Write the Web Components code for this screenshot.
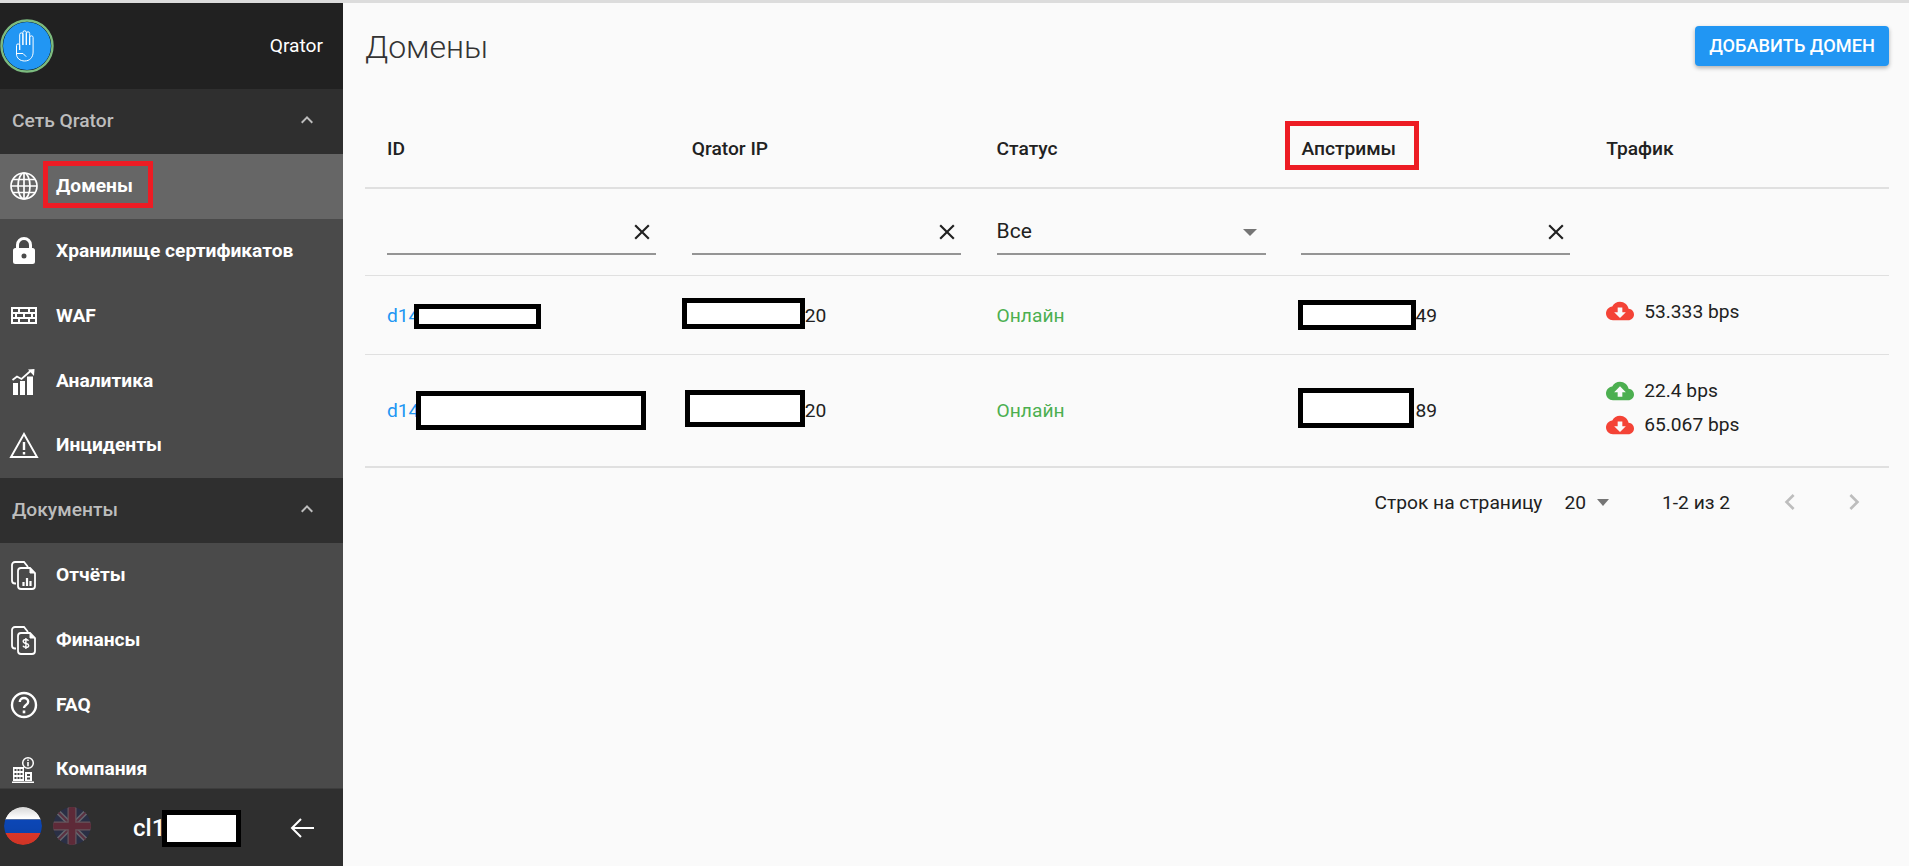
<!DOCTYPE html>
<html lang="ru">
<head>
<meta charset="utf-8">
<title>Домены</title>
<style>
  html, body { margin: 0; height: 100%; overflow: hidden; background: #fafafa; }
  body { font-family: Roboto, "Liberation Sans", sans-serif; }
</style>
</head>
<body>
<qr-app>
  <qr-sidebar slot="side">
    <qr-nav-group label="Сеть Qrator"></qr-nav-group>
    <qr-nav-item icon="globe" active marked>Домены</qr-nav-item>
    <qr-nav-item icon="lock">Хранилище сертификатов</qr-nav-item>
    <qr-nav-item icon="wall">WAF</qr-nav-item>
    <qr-nav-item icon="chart">Аналитика</qr-nav-item>
    <qr-nav-item icon="warn">Инциденты</qr-nav-item>
    <qr-nav-group label="Документы"></qr-nav-group>
    <qr-nav-item icon="report">Отчёты</qr-nav-item>
    <qr-nav-item icon="finance">Финансы</qr-nav-item>
    <qr-nav-item icon="faq">FAQ</qr-nav-item>
    <qr-nav-item icon="company">Компания</qr-nav-item>
  </qr-sidebar>
  <qr-domains slot="main"></qr-domains>
</qr-app>

<script>
const PAGES = `<path d="M7 23.500H6a3 3 0 0 1-3-3V5a3 3 0 0 1 3-3h9l4 5"/><path d="M12 8h9l5 5v13a3 3 0 0 1-3 3H12a3 3 0 0 1-3-3V11a3 3 0 0 1 3-3z"/><path d="M21 8l5 5h-5z" fill="#fff" stroke-width="1"/>`;
const ICONS = {
  globe: `<svg width="30" height="30" viewBox="0 0 30 30" fill="none" stroke="#fff" stroke-width="1.7"><circle cx="15" cy="15" r="13"/><ellipse cx="15" cy="15" rx="6" ry="13"/><path d="M15 2v26M2 15h26M4 8.500h22M4 21.500h22"/></svg>`,
  lock: `<svg width="30" height="30" viewBox="0 0 30 30" fill="#fff"><path fill-rule="evenodd" d="M15 1a8 8 0 0 0-8 8v3H6.500A2.500 2.500 0 0 0 4 14.500v11A2.500 2.500 0 0 0 6.500 28h17a2.500 2.500 0 0 0 2.500-2.500v-11A2.500 2.500 0 0 0 23.500 12H23V9a8 8 0 0 0-8-8zm0 3a5 5 0 0 1 5 5v3H10V9a5 5 0 0 1 5-5zm0 13.500a2.500 2.500 0 1 1 0 5 2.500 2.500 0 0 1 0-5z"/></svg>`,
  wall: `<svg width="30" height="30" viewBox="0 0 30 30" fill="none" stroke="#fff" stroke-width="2"><rect x="3" y="7" width="24" height="15"/><path d="M3 12h24M3 17h24M10 7v5M20 7v5M7 12v5M15 12v5M23 12v5M10 17v5M20 17v5"/></svg>`,
  chart: `<svg width="30" height="30" viewBox="0 0 30 30" fill="#fff"><path d="M4 17h5v12H4zM11 15h5v14h-5zM18 10.500h6V29h-6z"/><path d="M3.500 14l4.500-3.500 4.500 2.500 9-8" fill="none" stroke="#fff" stroke-width="1.800"/><path d="M19 3.500l6.500-.5-.5 7z"/></svg>`,
  warn: `<svg width="30" height="30" viewBox="0 0 30 30" fill="none"><path d="M15 4L28 27H2z" stroke="#fff" stroke-width="1.900"/><path d="M13.800 12h2.400v8h-2.400zM13.800 22h2.400v2.500h-2.400z" fill="#fff"/></svg>`,
  report: `<svg width="30" height="30" viewBox="0 0 30 30" fill="none" stroke="#fff" stroke-width="1.800">${PAGES}<path d="M14.500 26v-4M18 26v-8M21.500 26v-5" stroke-width="2.200"/></svg>`,
  finance: `<svg width="30" height="30" viewBox="0 0 30 30" fill="none" stroke="#fff" stroke-width="1.800">${PAGES}<path d="M19.500 15.800c-.4-.9-1.300-1.300-2.600-1.300-1.700 0-2.700.8-2.700 2 0 2.600 5.500 1.500 5.500 4 0 1.200-1.200 1.900-2.800 1.900-1.500 0-2.600-.6-2.900-1.600M16.900 13v11" stroke-width="1.400"/></svg>`,
  faq: `<svg width="30" height="30" viewBox="0 0 30 30" fill="none" stroke="#fff"><circle cx="15" cy="15" r="12" stroke-width="2.400"/><path d="M10.800 12c0-2.400 1.800-4 4.200-4s4.200 1.600 4.200 3.700c0 3.300-4.200 3.400-4.200 6.300" stroke-width="2.400"/><path d="M15 20.500v2.800" stroke-width="2.600"/></svg>`,
  company: `<svg width="30" height="30" viewBox="0 0 30 30" fill="#fff"><path d="M4 13h11v14H4zM16 18h7v9h-7zM3 27.500h22V29H3z"/><circle cx="19" cy="9" r="5.300" fill="none" stroke="#fff" stroke-width="1.500"/><path d="M18.200 8h1.600v4.300h-1.600zM18.200 5.500h1.600V7h-1.600z"/><path d="M5.500 15h2v2h-2zM8.500 15h2v2h-2zM11.500 15h2v2h-2zM5.500 19h2v2h-2zM8.500 19h2v2h-2zM11.500 19h2v2h-2zM5.500 23h2v2h-2zM8.500 23h2v2h-2zM11.500 23h2v2h-2zM18 20h3v2h-3zM18 23.500h3v2h-3z" fill="#4a4a4a"/></svg>`
};
const CLOSE = `<svg width="26" height="26" viewBox="0 0 24 24" fill="#212121"><path d="M19 6.410L17.590 5 12 10.590 6.410 5 5 6.410 10.590 12 5 17.590 6.410 19 12 13.410 17.590 19 19 17.590 13.410 12z"/></svg>`;
const CLOUD_BASE = 'M19.350 10.040C18.670 6.590 15.640 4 12 4 9.110 4 6.600 5.640 5.350 8.040 2.340 8.360 0 10.910 0 14c0 3.310 2.690 6 6 6h13c2.760 0 5-2.240 5-5 0-2.640-2.050-4.780-4.650-4.960z';

function define(name, html) {
  customElements.define(name, class extends HTMLElement {
    connectedCallback() {
      if (this.shadowRoot) return;
      this.attachShadow({ mode: 'open' });
      this.shadowRoot.innerHTML = typeof html === 'function' ? html(this) : html;
    }
  });
}

define('qr-app', `
  <style>
    :host { display: flex; flex-direction: column; height: 866px; background: #fafafa; }
    .strip { height: 3px; background: #dcdcdc; flex: none; }
    .body { flex: 1; display: flex; min-height: 0; }
    .side { flex: none; width: 343px; display: flex; }
    .main { flex: 1; min-width: 0; padding: 0 20px 0 21px; margin-left: 1px; }
  </style>
  <div class="strip"></div>
  <div class="body">
    <div class="side"><slot name="side"></slot></div>
    <div class="main"><slot name="main"></slot></div>
  </div>
`);

define('qr-sidebar', `
  <style>
    :host { display: flex; flex-direction: column; width: 343px; background: #4a4a4a; color: #fff; }
    header { flex: none; height: 86px; background: #212121; display: flex; align-items: center; justify-content: space-between; padding-right: 20px; }
    .logo { width: 54px; height: 54px; flex: none; margin-top: -1px; }
    .name { font-size: 19.200px; margin-top: -1px; }
    .scroll { flex: 1; min-height: 0; overflow: hidden; }
    footer { flex: none; height: 78px; background: #2f2f2f; border-top: 1px solid #3d3d3d; box-sizing: border-box; position: relative; display: flex; align-items: center; }
    .flag { width: 38px; height: 38px; border-radius: 50%; flex: none; margin-top: -4px; }
    .ru { margin-left: 4px; }
    .uk { margin-left: 11px; }
    .user { margin-left: 42px; width: 157px; font-size: 24px; font-weight: 500; }
    .back { flex: none; width: 24px; height: 24px; }
    .mask { position: absolute; left: 162px; top: 21px; width: 79px; height: 37px; background: #fff; border: 5px solid #000; box-sizing: border-box; }
  </style>
  <header>
    <svg class="logo" viewBox="0 0 54 54">
      <circle cx="27" cy="27" r="25.500" fill="#000" stroke="#7cbb7f" stroke-width="2.400"/>
      <circle cx="27" cy="27" r="24" fill="#2196f3"/>
      <path d="M16.500 35V26.500a1.600 1.600 0 0 1 3.200 0V31M19.700 31V15.500a1.600 1.600 0 0 1 3.200 0V26V13.500a1.700 1.700 0 0 1 3.400 0V26V14.500a1.700 1.700 0 0 1 3.400 0V26V18.500a1.700 1.700 0 0 1 3.400 0V33c0 5.500-3.500 9-8.400 9-4.800 0-8.200-3-8.200-7M17 34.500h6l3.200 3.200" fill="none" stroke="#fff" stroke-width="1" stroke-linejoin="round"/>
    </svg>
    <span class="name">Qrator</span>
  </header>
  <div class="scroll"><slot></slot></div>
  <footer>
    <svg class="flag ru" viewBox="0 0 38 38">
      <defs>
        <clipPath id="c"><circle cx="19" cy="19" r="19"/></clipPath>
        <linearGradient id="g" x1="0" y1="0" x2="0" y2="1"><stop offset="0" stop-color="#000" stop-opacity=".16"/><stop offset=".3" stop-color="#000" stop-opacity="0"/><stop offset="1" stop-color="#000" stop-opacity=".1"/></linearGradient>
      </defs>
      <g clip-path="url(#c)"><rect width="38" height="12.500" fill="#fff"/><rect y="12.500" width="38" height="13.500" fill="#0c47b7"/><rect y="26" width="38" height="12" fill="#e63a2a"/><rect width="38" height="38" fill="url(#g)"/></g>
    </svg>
    <svg class="flag uk" viewBox="0 0 38 38">
      <defs><clipPath id="d"><circle cx="19" cy="19" r="19"/></clipPath></defs>
      <g clip-path="url(#d)"><rect width="38" height="38" fill="#2a2f45"/><path d="M0 0l38 38M38 0L0 38" stroke="#66666e" stroke-width="5"/><path d="M0 0l38 38M38 0L0 38" stroke="#5a3040" stroke-width="2"/><path d="M19 0v38M0 19h38" stroke="#66565c" stroke-width="9"/><path d="M19 0v38M0 19h38" stroke="#5e2a38" stroke-width="6.500"/></g>
    </svg>
    <span class="user">cl1</span>
    <svg class="back" viewBox="0 0 24 24" fill="none" stroke="#fff" stroke-width="2"><path d="M24 12H2M11 3l-9 9 9 9"/></svg>
    <div class="mask"></div>
  </footer>
`);

define('qr-nav-group', el => `
  <style>
    :host { display: flex; align-items: center; justify-content: space-between; height: 64.800px; box-sizing: border-box; background: #2f2f2f; padding: 0 24px 2px 12px; color: #bdbdbd; font-size: 19.200px; font-weight: 500; }
    svg { display: block; }
  </style>
  <span>${el.getAttribute('label')}</span>
  <svg width="24" height="24" viewBox="0 0 24 24" fill="#bdbdbd"><path d="M7.410 15.410L12 10.830l4.590 4.580L18 14l-6-6-6 6z"/></svg>
`);

define('qr-nav-item', el => `
  <style>
    :host { display: flex; align-items: center; height: 64.800px; background: ${el.hasAttribute('active') ? '#666' : '#4a4a4a'}; padding-left: 9px; position: relative; font-size: 19.200px; font-weight: 700; color: #fff; white-space: nowrap; }
    .icon { flex: none; width: 30px; height: 30px; margin-right: 17px; }
    .icon svg { display: block; }
    .text { margin-top: -1px; }
    .mark { position: absolute; left: 43px; top: 7px; width: 110px; height: 47px; border: 5px solid #ed1c24; box-sizing: border-box; }
  </style>
  <span class="icon">${ICONS[el.getAttribute('icon')]}</span>
  <span class="text"><slot></slot></span>
  ${el.hasAttribute('marked') ? '<div class="mark"></div>' : ''}
`);

define('qr-redact', el => `
  <style>
    :host { position: absolute; box-sizing: border-box; border: 5px solid #000; background: #fff; left: ${el.getAttribute('x')}px; top: ${el.getAttribute('y')}px; width: ${el.getAttribute('w')}px; height: ${el.getAttribute('h')}px; }
  </style>
`);

define('qr-filter', el => `
  <style>
    :host { display: flex; align-items: center; justify-content: space-between; height: 44px; width: 269px; box-sizing: border-box; border-bottom: 2px solid #949494; font-size: 21px; color: #212121; }
    svg { display: block; margin-right: 1px; }
    .value { margin-top: -2px; }
    .caret { width: 0; height: 0; border: 7.500px solid transparent; border-top: 7.500px solid #757575; border-bottom: 0; margin-right: 9px; }
  </style>
  ${el.hasAttribute('select')
    ? `<span class="value">${el.getAttribute('select')}</span><span class="caret"></span>`
    : `<span></span>${CLOSE}`}
`);

define('qr-traffic', el => `
  <style>
    :host { display: flex; align-items: center; height: 34px; font-size: 19.200px; color: #212121; white-space: nowrap; }
    svg { display: block; margin-right: 10px; }
  </style>
  <svg width="28" height="28" viewBox="0 0 24 24" fill="${el.getAttribute('dir') === 'up' ? '#4caf50' : '#f44336'}">
    <path d="${CLOUD_BASE}"/>
    <path fill="#fafafa" d="${el.getAttribute('dir') === 'up' ? 'M14 13v4h-4v-4H7l5-5 5 5h-3z' : 'M17 13l-5 5-5-5h3V9h4v4h3z'}"/>
  </svg>
  <slot></slot>
`);

define('qr-domains', `
  <style>
    :host { display: block; color: #212121; font-size: 19.200px; }
    .top { display: flex; justify-content: space-between; align-items: flex-start; height: 114px; }
    h1 { margin: 21px 0 0; font-size: 32px; font-weight: 300; line-height: 46px; color: #333; }
    button { all: unset; margin-top: 23px; width: 194px; height: 40px; background: #2196f3; color: #fff; border-radius: 4px; font: 500 18.200px Roboto, sans-serif; text-align: center; line-height: 38px; box-shadow: 0 2px 4px rgba(0,0,0,.3); }
    .row { display: grid; grid-template-columns: repeat(5, 1fr); }
    .cell { padding-left: 22px; position: relative; display: flex; align-items: center; }
    .head { height: 62px; padding-bottom: 8px; border-bottom: 2px solid #e0e0e0; font-weight: 500; }
    .filters { height: 87px; border-bottom: 1px solid #e0e0e0; box-sizing: border-box; }
    .filters .cell { padding-top: 2px; }
    .r1 { height: 79px; border-bottom: 1px solid #e0e0e0; box-sizing: border-box; }
    .r2 { height: 113px; border-bottom: 2px solid #e0e0e0; box-sizing: border-box; }
    a { color: #2196f3; }
    .ok { color: #4caf50; }
    .mark { position: absolute; left: -16px; top: -16px; width: 134px; height: 49px; border: 5px solid #ed1c24; box-sizing: border-box; }
    .label { position: relative; }
    .traffic { flex-direction: column; align-items: stretch; }
    .pager { display: flex; justify-content: flex-end; align-items: center; height: 68px; }
    .pager span { white-space: nowrap; }
    .caret { width: 0; height: 0; border: 6.500px solid transparent; border-top: 7px solid #757575; border-bottom: 0; margin-left: 11px; }
    .chev { display: block; }
  </style>
  <div class="top">
    <h1>Домены</h1>
    <button>ДОБАВИТЬ ДОМЕН</button>
  </div>
  <div class="row head">
    <div class="cell">ID</div>
    <div class="cell">Qrator IP</div>
    <div class="cell">Статус</div>
    <div class="cell"><span class="label">Апстримы<div class="mark"></div></span></div>
    <div class="cell">Трафик</div>
  </div>
  <div class="row filters">
    <div class="cell"><qr-filter></qr-filter></div>
    <div class="cell"><qr-filter></qr-filter></div>
    <div class="cell"><qr-filter select="Все"></qr-filter></div>
    <div class="cell"><qr-filter></qr-filter></div>
    <div class="cell"></div>
  </div>
  <div class="row r1">
    <div class="cell"><a>d14</a><qr-redact x="49" y="28" w="127" h="25"></qr-redact></div>
    <div class="cell"><span style="margin-left:113px">20</span><qr-redact x="12" y="22" w="123" h="31"></qr-redact></div>
    <div class="cell ok">Онлайн</div>
    <div class="cell"><span style="margin-left:114px">49</span><qr-redact x="19" y="24" w="118" h="30"></qr-redact></div>
    <div class="cell traffic" style="justify-content:flex-start;padding-top:18px;box-sizing:border-box"><qr-traffic dir="down">53.333 bps</qr-traffic></div>
  </div>
  <div class="row r2">
    <div class="cell"><a>d14</a><qr-redact x="51" y="36" w="230" h="39"></qr-redact></div>
    <div class="cell"><span style="margin-left:113px">20</span><qr-redact x="15" y="35" w="120" h="37"></qr-redact></div>
    <div class="cell ok">Онлайн</div>
    <div class="cell"><span style="margin-left:114px">89</span><qr-redact x="19" y="33" w="116" h="40"></qr-redact></div>
    <div class="cell traffic" style="justify-content:center;padding-bottom:6px;box-sizing:border-box"><qr-traffic dir="up">22.4 bps</qr-traffic><qr-traffic dir="down">65.067 bps</qr-traffic></div>
  </div>
  <div class="pager">
    <span>Строк на страницу</span>
    <span style="margin-left:22px">20</span>
    <span class="caret"></span>
    <span style="margin-left:53px">1-2 из 2</span>
    <svg class="chev" style="margin-left:44px" width="32" height="32" viewBox="0 0 24 24" fill="#bdbdbd"><path d="M15.410 7.410L14 6l-6 6 6 6 1.410-1.410L10.830 12z"/></svg>
    <svg class="chev" style="margin-left:32px;margin-right:19px" width="32" height="32" viewBox="0 0 24 24" fill="#bdbdbd"><path d="M8.590 16.590L10 18l6-6-6-6-1.410 1.410L13.170 12z"/></svg>
  </div>
`);
</script>
</body>
</html>
